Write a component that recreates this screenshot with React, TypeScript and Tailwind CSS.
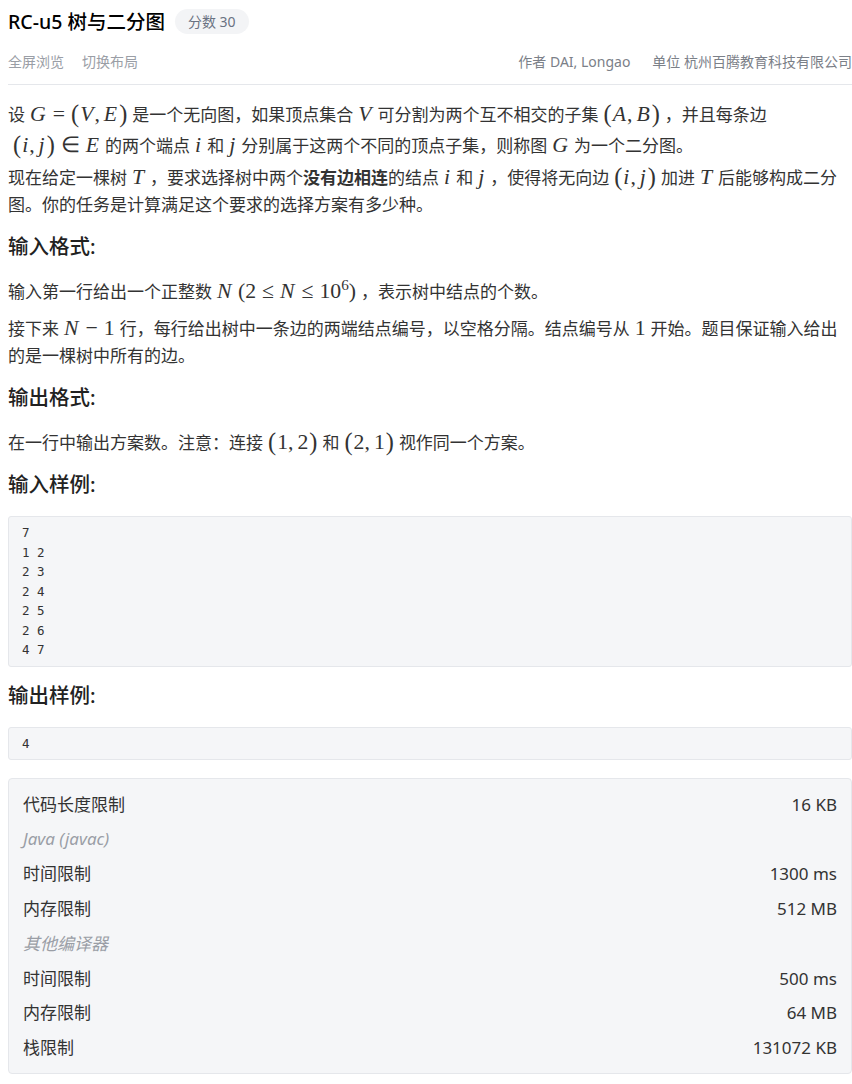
import type { ReactNode } from 'react'

const sans = 'font-["Noto_Sans","Noto_Sans_CJK_SC",sans-serif]'

// inline math, rendered roughly like KaTeX
function M({ children }: { children: ReactNode }) {
  return (
    <span className='font-["Liberation_Serif",serif] text-[1.28em] leading-none whitespace-nowrap mx-[5px]'>
      {children}
    </span>
  )
}

function V({ children }: { children: ReactNode }) {
  return <i className="pr-[1px]">{children}</i>
}

// relation / binary operator with KaTeX-like spacing
function Op({ children }: { children: ReactNode }) {
  return <span className="mx-[6px]">{children}</span>
}

// tall delimiter like \left( \right)
function L() {
  return <span className="text-[1.12em] align-[-1px] mr-[1px]">(</span>
}
function R() {
  return <span className="text-[1.12em] align-[-1px] ml-[1px]">)</span>
}
function C() {
  return <span className="mr-[4px]">,</span>
}

function Heading({ children }: { children: ReactNode }) {
  return <h3 className="text-[20.5px] font-medium text-[#222] leading-[28px] mt-[14px] mb-[18px]">{children}</h3>
}

function P({ children, tall }: { children: ReactNode; tall?: boolean }) {
  return (
    <p className={`text-[17px] text-[#333] ${tall ? 'leading-[31px] mb-[3px]' : 'leading-[27px] mb-[10px]'}`}>
      {children}
    </p>
  )
}

function Code({ lines }: { lines: string[] }) {
  return (
    <pre className='bg-[#f5f6f8] border border-[#e5e7eb] rounded-[3px] px-[13px] py-[6px] mb-[8px] font-["DejaVu_Sans_Mono",monospace] text-[12.5px] leading-[19.5px] text-[#333]'>
      {lines.join('\n')}
    </pre>
  )
}

const limits = [
  { k: '代码长度限制', v: '16 KB' },
  { k: 'Java (javac)', v: '', sub: true },
  { k: '时间限制', v: '1300 ms' },
  { k: '内存限制', v: '512 MB' },
  { k: '其他编译器', v: '', sub: true },
  { k: '时间限制', v: '500 ms' },
  { k: '内存限制', v: '64 MB' },
  { k: '栈限制', v: '131072 KB' },
]

export default function App() {
  return (
    <div className={`${sans} bg-white min-h-screen pl-[8px] text-[#333]`}>
      {/* 标题 */}
      <div className="flex items-center gap-[10px] pt-[9px]">
        <h1 className="text-[19.5px] font-medium text-black leading-[25px]">RC-u5 树与二分图</h1>
        <span className="h-[25px] px-[13px] rounded-full bg-[#f3f4f6] text-[14px] text-gray-500 flex items-center">分数 30</span>
      </div>

      {/* 工具栏 */}
      <div className="flex items-center justify-between mt-[18px] pb-[12px] border-b border-[#e5e7eb] text-[14px] leading-[20px]">
        <div className="flex gap-[18px] text-[#9a9ea6]">
          <span>全屏浏览</span>
          <span>切换布局</span>
        </div>
        <div className="flex gap-[22px] text-[#7b8088]">
          <span>作者 DAI, Longao</span>
          <span>单位 杭州百腾教育科技有限公司</span>
        </div>
      </div>

      <div className="pt-[14px]">
        <P tall>
          设<M><V>G</V><Op>=</Op><L /><V>V</V><C /><V>E</V><R /></M>是一个无向图，如果顶点集合<M><V>V</V></M>可分割为两个互不相交的子集<M><L /><V>A</V><C /><V>B</V><R /></M>，并且每条边
          <M><L /><V>i</V><C /><V>j</V><R /><Op>∈</Op><V>E</V></M>的两个端点<M><V>i</V></M>和<M><V>j</V></M>分别属于这两个不同的顶点子集，则称图<M><V>G</V></M>为一个二分图。
        </P>
        <P>
          现在给定一棵树<M><V>T</V></M>，要求选择树中两个<b className="font-bold">没有边相连</b>的结点<M><V>i</V></M>和<M><V>j</V></M>，使得将无向边<M><L /><V>i</V><C /><V>j</V><R /></M>加进<M><V>T</V></M>后能够构成二分图。你的任务是计算满足这个要求的选择方案有多少种。
        </P>

        <Heading>输入格式:</Heading>
        <P>
          输入第一行给出一个正整数<M><V>N</V> (2<Op>≤</Op><V>N</V><Op>≤</Op>10<sup className="text-[0.7em]">6</sup>)</M>，表示树中结点的个数。
        </P>
        <P>
          接下来<M><V>N</V><Op>−</Op>1</M>行，每行给出树中一条边的两端结点编号，以空格分隔。结点编号从<M>1</M>开始。题目保证输入给出的是一棵树中所有的边。
        </P>

        <Heading>输出格式:</Heading>
        <P>
          在一行中输出方案数。注意：连接<M><L />1<C />2<R /></M>和<M><L />2<C />1<R /></M>视作同一个方案。
        </P>

        <Heading>输入样例:</Heading>
        <Code lines={['7', '1 2', '2 3', '2 4', '2 5', '2 6', '4 7']} />

        <Heading>输出样例:</Heading>
        <Code lines={['4']} />

        {/* 限制 */}
        <div className="mt-[18px] bg-[#f5f6f8] border border-[#e5e7eb] rounded-[4px] px-[14px] py-[8px] mb-[12px]">
          {limits.map((r, i) => (
            <div key={i} className="flex justify-between items-center h-[34.8px] text-[17px]">
              <span className={r.sub ? 'italic text-[#9a9ea6]' : 'text-[#333]'}>{r.k}</span>
              <span className="text-[#333]">{r.v}</span>
            </div>
          ))}
        </div>
      </div>
    </div>
  )
}
